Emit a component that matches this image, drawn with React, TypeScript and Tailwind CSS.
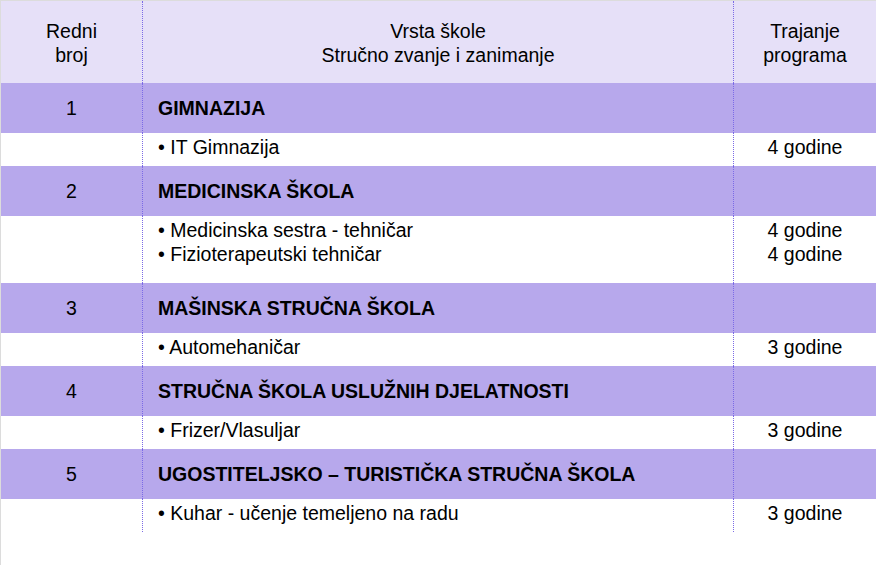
const SCHOOLS = [
  {
    no: "1",
    name: "GIMNAZIJA",
    items: [{ label: "IT Gimnazija", years: "4 godine" }],
    h: "h-[33px]",
  },
  {
    no: "2",
    name: "MEDICINSKA ŠKOLA",
    items: [
      { label: "Medicinska sestra - tehničar", years: "4 godine" },
      { label: "Fizioterapeutski tehničar", years: "4 godine" },
    ],
    h: "h-[67px]",
  },
  {
    no: "3",
    name: "MAŠINSKA STRUČNA ŠKOLA",
    items: [{ label: "Automehaničar", years: "3 godine" }],
    h: "h-[33px]",
  },
  {
    no: "4",
    name: "STRUČNA ŠKOLA USLUŽNIH DJELATNOSTI",
    items: [{ label: "Frizer/Vlasuljar", years: "3 godine" }],
    h: "h-[33px]",
  },
  {
    no: "5",
    name: "UGOSTITELJSKO – TURISTIČKA STRUČNA ŠKOLA",
    items: [{ label: "Kuhar - učenje temeljeno na radu", years: "3 godine" }],
    h: "h-[33px]",
  },
];

const divider = "border-l border-dotted border-[#7b6ae6]";

export default function App() {
  return (
    <div className="min-h-screen w-[876px] bg-white border-t border-l border-[#dcdcdc] font-['Liberation_Sans',Arial,sans-serif] text-[19.5px] leading-[24px] text-black">
      {/* Header */}
      <div className="flex h-[82px] bg-[#e6e0f8]">
        <div className="w-[141px] flex flex-col items-center justify-center pt-[2px]">
          <span>Redni</span>
          <span>broj</span>
        </div>
        <div className={`w-[591px] flex flex-col items-center justify-center pt-[2px] ${divider}`}>
          <span>Vrsta škole</span>
          <span>Stručno zvanje i zanimanje</span>
        </div>
        <div className={`flex-1 flex flex-col items-center justify-center pt-[2px] ${divider}`}>
          <span>Trajanje</span>
          <span>programa</span>
        </div>
      </div>

      {SCHOOLS.map((s) => (
        <div key={s.no}>
          {/* School row */}
          <div className="flex h-[50px] bg-[#b7a8ec]">
            <div className="w-[141px] flex items-center justify-center">{s.no}</div>
            <div className={`w-[591px] flex items-center pl-[15px] font-bold ${divider}`}>
              {s.name}
            </div>
            <div className={`flex-1 ${divider}`} />
          </div>
          {/* Programmes */}
          <div className={`flex ${s.h} bg-white`}>
            <div className="w-[141px]" />
            <div className={`w-[591px] flex flex-col pl-[15px] pt-[2px] ${divider}`}>
              {s.items.map((it) => (
                <span key={it.label}>• {it.label}</span>
              ))}
            </div>
            <div className={`flex-1 flex flex-col items-center pt-[2px] ${divider}`}>
              {s.items.map((it) => (
                <span key={it.label}>{it.years}</span>
              ))}
            </div>
          </div>
        </div>
      ))}
    </div>
  );
}
